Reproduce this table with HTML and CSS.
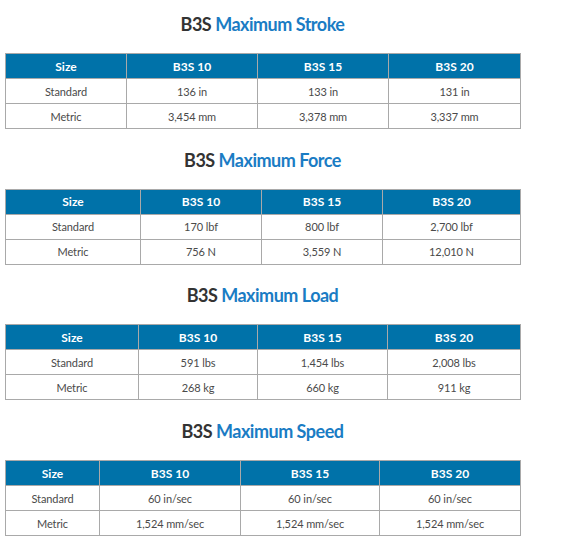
FILE: index.html
```html
<!DOCTYPE html>
<html>
<head>
<meta charset="utf-8">
<link rel="stylesheet" href="styles.css">
</head>
<body>
<main class="page">
  <section class="spec">
    <h2 class="spec-title"><span class="model">B3S</span> <span class="accent">Maximum Stroke</span></h2>
    <table class="spec-table">
      <colgroup><col class="c-t1a"><col class="c-t1b"><col class="c-t1c"><col class="c-t1d"></colgroup>
      <thead><tr><th>Size</th><th>B3S 10</th><th>B3S 15</th><th>B3S 20</th></tr></thead>
      <tbody>
        <tr><td>Standard</td><td>136 in</td><td>133 in</td><td>131 in</td></tr>
        <tr><td>Metric</td><td>3,454 mm</td><td>3,378 mm</td><td>3,337 mm</td></tr>
      </tbody>
    </table>
  </section>
  <section class="spec">
    <h2 class="spec-title"><span class="model">B3S</span> <span class="accent">Maximum Force</span></h2>
    <table class="spec-table">
      <colgroup><col class="c-t2a"><col class="c-t2b"><col class="c-t2c"><col class="c-t2d"></colgroup>
      <thead><tr><th>Size</th><th>B3S 10</th><th>B3S 15</th><th>B3S 20</th></tr></thead>
      <tbody>
        <tr><td>Standard</td><td>170 lbf</td><td>800 lbf</td><td>2,700 lbf</td></tr>
        <tr><td>Metric</td><td>756 N</td><td>3,559 N</td><td>12,010 N</td></tr>
      </tbody>
    </table>
  </section>
  <section class="spec">
    <h2 class="spec-title"><span class="model">B3S</span> <span class="accent">Maximum Load</span></h2>
    <table class="spec-table">
      <colgroup><col class="c-t3a"><col class="c-t3b"><col class="c-t3c"><col class="c-t3d"></colgroup>
      <thead><tr><th>Size</th><th>B3S 10</th><th>B3S 15</th><th>B3S 20</th></tr></thead>
      <tbody>
        <tr><td>Standard</td><td>591 lbs</td><td>1,454 lbs</td><td>2,008 lbs</td></tr>
        <tr><td>Metric</td><td>268 kg</td><td>660 kg</td><td>911 kg</td></tr>
      </tbody>
    </table>
  </section>
  <section class="spec">
    <h2 class="spec-title"><span class="model">B3S</span> <span class="accent">Maximum Speed</span></h2>
    <table class="spec-table">
      <colgroup><col class="c-t4a"><col class="c-t4b"><col class="c-t4c"><col class="c-t4d"></colgroup>
      <thead><tr><th>Size</th><th>B3S 10</th><th>B3S 15</th><th>B3S 20</th></tr></thead>
      <tbody>
        <tr><td>Standard</td><td>60 in/sec</td><td>60 in/sec</td><td>60 in/sec</td></tr>
        <tr><td>Metric</td><td>1,524 mm/sec</td><td>1,524 mm/sec</td><td>1,524 mm/sec</td></tr>
      </tbody>
    </table>
  </section>
</main>
</body>
</html>
```

FILE: styles.css
```css
* { box-sizing: border-box; }
html, body { margin: 0; padding: 0; background: #fff; }
body {
  font-family: Lato, "Open Sans", "Liberation Sans", sans-serif;
  color: #444;
}
.page {
  width: 515px;
  margin-left: 5px;
  padding-top: 12px;
  display: flex;
  flex-direction: column;
  gap: 18.7px;
}
.spec { display: flex; flex-direction: column; }
.spec-title {
  margin: 0 0 17px;
  font-size: 18px;
  line-height: 24px;
  font-weight: 700;
  letter-spacing: -0.5px;
  text-align: center;
  color: #333;
}
.spec-title .accent { color: #1a7cc4; }
.spec-table {
  width: 515px;
  border-collapse: collapse;
  table-layout: fixed;
  border: 1px solid #a9a9a9;
}
.spec-table th,
.spec-table td {
  height: 25px;
  padding: 0;
  text-align: center;
  vertical-align: middle;
  border: 1px solid #a9a9a9;
}
.spec-table th {
  background: #0072a9;
  color: #fff;
  font-weight: 700;
  font-size: 12px;
}
.spec-table td {
  color: #4a4a4a;
  font-size: 11px;
  letter-spacing: -0.1px;
}
.c-t1a { width: 121px; } .c-t1b { width: 131px; } .c-t1c { width: 131px; } .c-t1d { width: 132px; }
.c-t2a { width: 135px; } .c-t2b { width: 121px; } .c-t2c { width: 121px; } .c-t2d { width: 138px; }
.c-t3a { width: 133px; } .c-t3b { width: 119px; } .c-t3c { width: 130px; } .c-t3d { width: 133px; }
.c-t4a { width: 94px; } .c-t4b { width: 141px; } .c-t4c { width: 139px; } .c-t4d { width: 141px; }
```
